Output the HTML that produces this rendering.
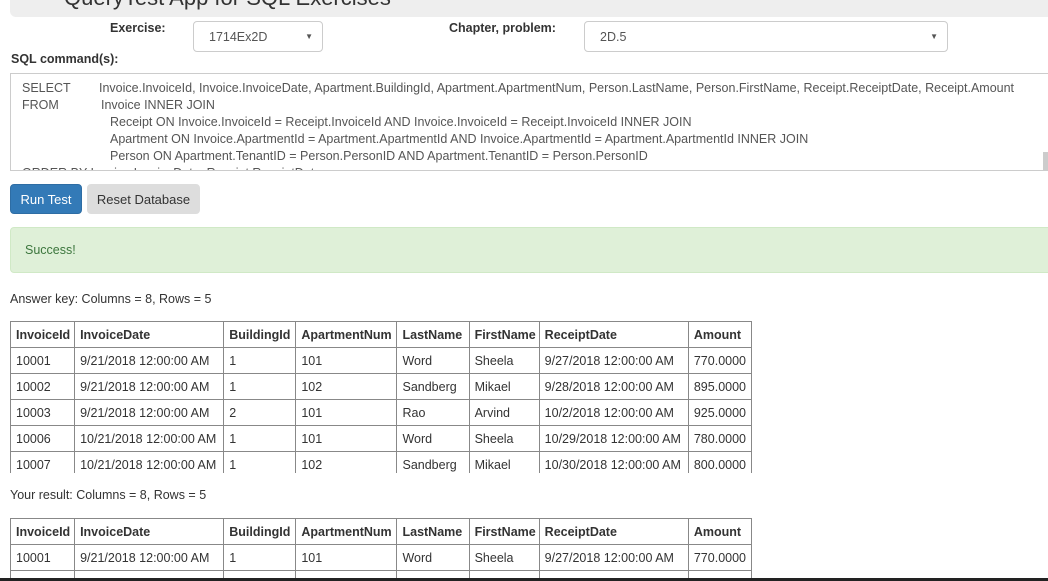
<!DOCTYPE html>
<html><head><meta charset="utf-8"><style>
*{box-sizing:border-box;margin:0;padding:0}
body{width:1048px;height:581px;overflow:hidden;background:#fff;font-family:"Liberation Sans",Arial,sans-serif;color:#333;font-size:13px;position:relative}
.abs{position:absolute}
.hdr{left:10px;top:-10px;width:1050px;height:27px;background:#eee;border-radius:6px}
.title{left:64px;top:-15px;font-size:22px;color:#333;white-space:nowrap}
.lbl{font-weight:bold;font-size:12.5px;color:#333}
.sel{background:#fff;border:1px solid #ccc;border-radius:4px;height:31px;font-size:12.5px;padding:8px 0 0 15px;color:#555}
.sel .ar{position:absolute;right:9px;top:10px;font-size:8px;color:#555}
.ta{left:10px;top:73px;width:1038px;height:98px;border:1px solid #ccc;border-right:none;overflow:hidden;font-size:12.5px;color:#555}
.ta div{position:absolute;white-space:nowrap}
.sb{left:1043px;top:152px;width:5px;height:18px;background:#ccc}
.btn{top:184px;height:30px;border-radius:4px;font-size:13px;padding-top:7px;text-align:center}
.alert{left:10px;top:227px;width:1045px;height:46px;background:#dff0d8;border:1px solid #d0e9c6;border-radius:4px;color:#3c763d;padding:15px 0 0 14px;font-size:12.5px}
.cap{left:10px;font-size:12.5px}
.tw{left:10px;overflow:hidden}
table{border-collapse:collapse;table-layout:fixed;width:742px}
td,th{border:1px solid #888;height:26px;padding:0 5px;font-size:12.5px;text-align:left;white-space:nowrap;overflow:hidden;color:#333}
th{font-weight:bold}
</style></head><body>
<div class="abs hdr"></div>
<div class="abs title">QueryTest App for SQL Exercises</div>
<div class="abs lbl" style="left:110px;top:21px">Exercise:</div>
<div class="abs sel" style="left:193px;top:21px;width:130px">1714Ex2D<span class="ar">▼</span></div>
<div class="abs lbl" style="left:449px;top:21px">Chapter, problem:</div>
<div class="abs sel" style="left:584px;top:21px;width:364px">2D.5<span class="ar">▼</span></div>
<div class="abs lbl" style="left:11px;top:52px">SQL command(s):</div>
<div class="abs ta">
<div style="left:11px;top:7px">SELECT</div><div style="left:88px;top:7px">Invoice.InvoiceId, Invoice.InvoiceDate, Apartment.BuildingId, Apartment.ApartmentNum, Person.LastName, Person.FirstName, Receipt.ReceiptDate, Receipt.Amount</div>
<div style="left:11px;top:24px">FROM</div><div style="left:90px;top:24px">Invoice INNER JOIN</div>
<div style="left:99px;top:41px">Receipt ON Invoice.InvoiceId = Receipt.InvoiceId AND Invoice.InvoiceId = Receipt.InvoiceId INNER JOIN</div>
<div style="left:99px;top:58px">Apartment ON Invoice.ApartmentId = Apartment.ApartmentId AND Invoice.ApartmentId = Apartment.ApartmentId INNER JOIN</div>
<div style="left:99px;top:75px">Person ON Apartment.TenantID = Person.PersonID AND Apartment.TenantID = Person.PersonID</div>
<div style="left:11px;top:92px">ORDER BY Invoice.InvoiceDate, Receipt.ReceiptDate</div>
</div>
<div class="abs sb"></div>
<div class="abs btn" style="left:10px;width:72px;background:#337ab7;border:1px solid #2e6da4;color:#fff">Run Test</div>
<div class="abs btn" style="left:87px;width:113px;background:#ddd;border:1px solid #ddd;color:#333">Reset Database</div>
<div class="abs alert">Success!</div>
<div class="abs cap" style="top:292px">Answer key: Columns = 8, Rows = 5</div>
<div class="abs tw" style="top:321px;height:152px">
<table><colgroup><col style="width:64px"><col style="width:149px"><col style="width:72px"><col style="width:101px"><col style="width:72px"><col style="width:70px"><col style="width:149px"><col style="width:63px"></colgroup>
<tr><th>InvoiceId</th><th>InvoiceDate</th><th>BuildingId</th><th>ApartmentNum</th><th>LastName</th><th>FirstName</th><th>ReceiptDate</th><th>Amount</th></tr>
<tr><td>10001</td><td>9/21/2018 12:00:00 AM</td><td>1</td><td>101</td><td>Word</td><td>Sheela</td><td>9/27/2018 12:00:00 AM</td><td>770.0000</td></tr>
<tr><td>10002</td><td>9/21/2018 12:00:00 AM</td><td>1</td><td>102</td><td>Sandberg</td><td>Mikael</td><td>9/28/2018 12:00:00 AM</td><td>895.0000</td></tr>
<tr><td>10003</td><td>9/21/2018 12:00:00 AM</td><td>2</td><td>101</td><td>Rao</td><td>Arvind</td><td>10/2/2018 12:00:00 AM</td><td>925.0000</td></tr>
<tr><td>10006</td><td>10/21/2018 12:00:00 AM</td><td>1</td><td>101</td><td>Word</td><td>Sheela</td><td>10/29/2018 12:00:00 AM</td><td>780.0000</td></tr>
<tr><td>10007</td><td>10/21/2018 12:00:00 AM</td><td>1</td><td>102</td><td>Sandberg</td><td>Mikael</td><td>10/30/2018 12:00:00 AM</td><td>800.0000</td></tr>
</table></div>
<div class="abs cap" style="top:488px">Your result: Columns = 8, Rows = 5</div>
<div class="abs tw" style="top:518px;height:61px">
<table><colgroup><col style="width:64px"><col style="width:149px"><col style="width:72px"><col style="width:101px"><col style="width:72px"><col style="width:70px"><col style="width:149px"><col style="width:63px"></colgroup>
<tr><th>InvoiceId</th><th>InvoiceDate</th><th>BuildingId</th><th>ApartmentNum</th><th>LastName</th><th>FirstName</th><th>ReceiptDate</th><th>Amount</th></tr>
<tr><td>10001</td><td>9/21/2018 12:00:00 AM</td><td>1</td><td>101</td><td>Word</td><td>Sheela</td><td>9/27/2018 12:00:00 AM</td><td>770.0000</td></tr>
<tr><td>10002</td><td>9/21/2018 12:00:00 AM</td><td>1</td><td>102</td><td>Sandberg</td><td>Mikael</td><td>9/28/2018 12:00:00 AM</td><td>895.0000</td></tr>
</table></div>
<div class="abs" style="left:0;top:578px;width:1048px;height:3px;background:#222"></div>
</body></html>
